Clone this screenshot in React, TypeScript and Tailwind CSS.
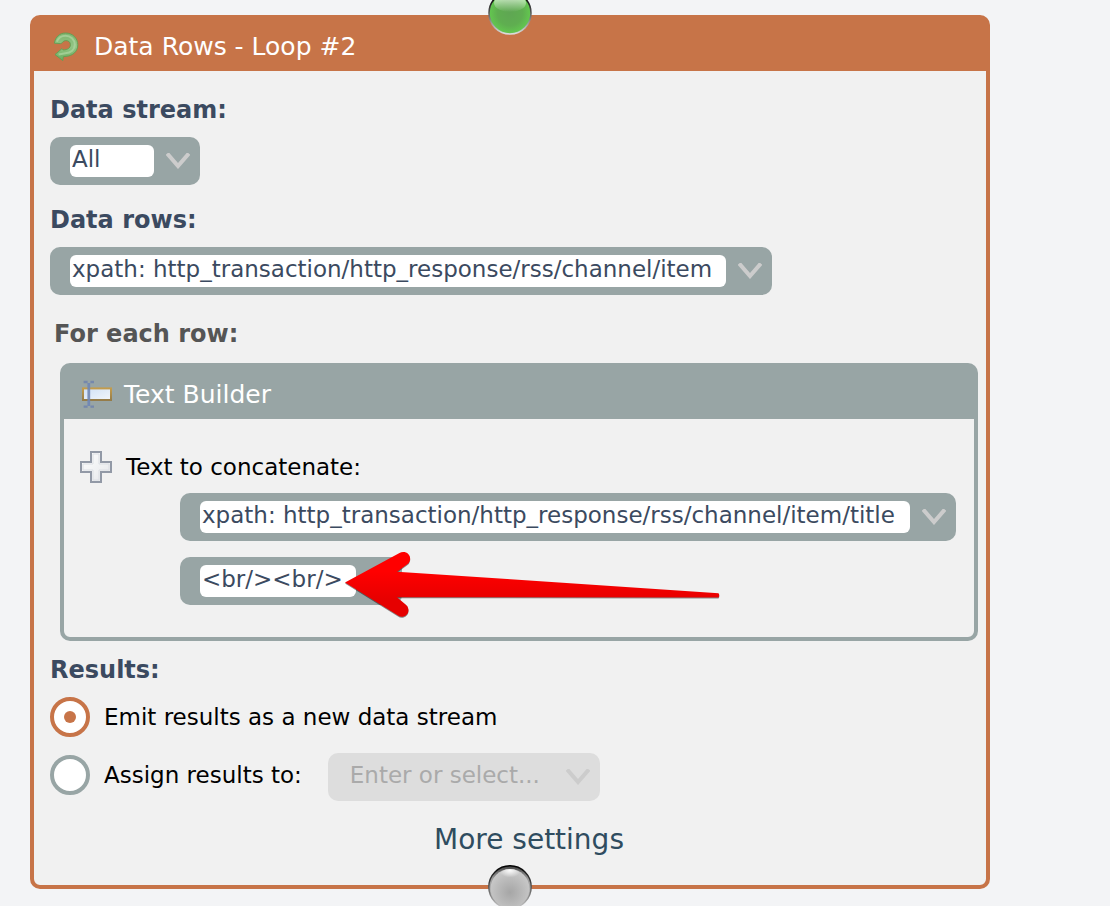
import React, { useState } from 'react';

interface ComboBoxProps {
    label: string;
    value?: string;
    placeholder?: string;
    widthClass: string;
    disabled?: boolean;
}

const ComboBox: React.FC<ComboBoxProps> = ({ label, value = '', placeholder, widthClass, disabled = false }) => {
    const [text, setText] = useState(value);

    return (
        <div className={`inline-flex h-12 max-w-full items-center rounded-[10px] pl-5 ${disabled ? 'bg-[#dddddd]' : 'bg-[#98a5a5]'}`}>
            <input
                type="text"
                aria-label={label}
                value={text}
                placeholder={placeholder}
                disabled={disabled}
                onChange={(e) => setText(e.target.value)}
                className={`h-8 min-w-0 rounded-md px-0.5 pb-1 text-[23px] leading-7 text-[#3b4a60] outline-none placeholder:text-[#aaaaaa] ${disabled ? 'bg-transparent' : 'bg-white'} ${widthClass}`}
            />
            <button type="button" aria-label={`Open ${label}`} disabled={disabled} className="flex h-12 w-[46px] shrink-0 items-center pl-3">
                <svg width="24" height="16" viewBox="0 0 24 16" fill="none" stroke="#cccccc" strokeWidth="4">
                    <path d="M1.2 0.5 L12 13 L22.8 0.5" />
                </svg>
            </button>
        </div>
    );
};

const LoopIcon = () => (
    <svg width="32" height="32" viewBox="0 0 32 32" className="shrink-0">
        <defs>
            <linearGradient id="loop" x1="0" y1="0" x2="0" y2="1">
                <stop offset="0" stopColor="#7db56f" />
                <stop offset="0.5" stopColor="#92c585" />
                <stop offset="1" stopColor="#69ab5d" />
            </linearGradient>
        </defs>
        <path
            d="M4.4 12.2 C5.4 5.6 9.8 2 15.6 2 C22.8 2 27.8 7.4 27.8 13.8 C27.8 20.4 23 24.8 16 25.4 L13.4 25.6 L12.8 29.6 L5 23.6 L12 17.6 L13.2 19 C17.6 18.8 20.4 17 20.4 13.8 C20.4 10.8 18.2 9.4 15.4 9.6 C12.8 9.8 12.6 12.4 10.4 12.6 Z"
            fill="url(#loop)"
            stroke="#609f52"
            strokeWidth="0.9"
            strokeLinejoin="round"
        />
        <path
            d="M6.8 10.6 C8.6 6.4 12 4.8 15.5 4.8 C20.6 4.8 24.8 8.6 24.8 13.8 C24.8 18.6 21 22 15.4 22.2 L8.6 23.4"
            fill="none"
            stroke="#b2d8a6"
            strokeWidth="2"
            opacity="0.65"
        />
    </svg>
);

const TextFieldIcon = () => (
    <svg width="32" height="32" viewBox="0 0 32 32" className="shrink-0">
        <defs>
            <linearGradient id="field" x1="0" y1="0" x2="1" y2="1">
                <stop offset="0" stopColor="#cfe0f5" />
                <stop offset="1" stopColor="#f2f6fb" />
            </linearGradient>
            <linearGradient id="fieldEdge" x1="0" y1="0" x2="0" y2="1">
                <stop offset="0" stopColor="#c39c4c" />
                <stop offset="1" stopColor="#957c49" />
            </linearGradient>
        </defs>
        <rect x="3" y="9.4" width="28" height="11.6" fill="url(#field)" stroke="url(#fieldEdge)" strokeWidth="2" />
        <path d="M8.8 4 V27" stroke="#7087b5" strokeWidth="2.8" opacity="0.9" />
        <path d="M3.6 3 H7.6 M10.4 3 H14 M3.6 27.6 H7.6 M10.4 27.6 H14" stroke="#6f83ae" strokeWidth="2.4" opacity="0.85" />
    </svg>
);

const PlusIcon = () => (
    <svg width="32" height="32" viewBox="0 0 32 32">
        <defs>
            <linearGradient id="plus" x1="0" y1="0" x2="1" y2="1">
                <stop offset="0" stopColor="#ffffff" />
                <stop offset="1" stopColor="#e4e6e9" />
            </linearGradient>
        </defs>
        <path d="M11 1 H21 V11 H31 V21 H21 V31 H11 V21 H1 V11 H11 Z" fill="url(#plus)" stroke="#9299a6" strokeWidth="2" />
        <path d="M13 3 H19 V13 H29 V19 H19 V29 H13 V19 H3 V13 H13 Z" fill="none" stroke="#dcdfe4" strokeWidth="1" />
    </svg>
);

const GreenPort = () => (
    <svg width="44" height="44" viewBox="0 0 44 44">
        <defs>
            <radialGradient id="greenBase" cx="0.5" cy="0.5" r="0.5">
                <stop offset="0" stopColor="#5fa653" />
                <stop offset="0.6" stopColor="#5fae50" />
                <stop offset="1" stopColor="#63c94f" />
            </radialGradient>
            <linearGradient id="greenGloss" x1="0" y1="0" x2="0" y2="1">
                <stop offset="0" stopColor="#ffffff" stopOpacity="0.8" />
                <stop offset="1" stopColor="#ffffff" stopOpacity="0" />
            </linearGradient>
            <linearGradient id="greenRim" x1="0" y1="0" x2="0" y2="1">
                <stop offset="0.2" stopColor="#111111" />
                <stop offset="0.6" stopColor="#777777" />
                <stop offset="1" stopColor="#dddddd" />
            </linearGradient>
        </defs>
        <circle cx="22" cy="22" r="21" fill="url(#greenBase)" stroke="url(#greenRim)" strokeWidth="1.6" />
        <ellipse cx="22" cy="12" rx="16" ry="9" fill="url(#greenGloss)" />
    </svg>
);

const GrayPort = () => (
    <svg width="44" height="44" viewBox="0 0 44 44">
        <defs>
            <radialGradient id="grayBase" cx="0.5" cy="0.6" r="0.55">
                <stop offset="0" stopColor="#a6a6a6" />
                <stop offset="0.6" stopColor="#bababa" />
                <stop offset="1" stopColor="#c8c8c8" />
            </radialGradient>
            <linearGradient id="grayShade" x1="0" y1="0" x2="0" y2="1">
                <stop offset="0" stopColor="#444444" />
                <stop offset="0.3" stopColor="#999999" />
                <stop offset="1" stopColor="#cccccc" />
            </linearGradient>
            <radialGradient id="grayGloss" cx="0.5" cy="0.1" r="0.5">
                <stop offset="0" stopColor="#ffffff" stopOpacity="0.95" />
                <stop offset="1" stopColor="#ffffff" stopOpacity="0" />
            </radialGradient>
            <linearGradient id="grayRim" x1="0" y1="0" x2="0" y2="1">
                <stop offset="0" stopColor="#000000" />
                <stop offset="0.5" stopColor="#555555" />
                <stop offset="1" stopColor="#cccccc" />
            </linearGradient>
        </defs>
        <circle cx="22" cy="22" r="21.2" fill="url(#grayShade)" stroke="url(#grayRim)" strokeWidth="1.4" />
        <circle cx="22" cy="23.4" r="19.4" fill="url(#grayBase)" />
        <ellipse cx="22" cy="11" rx="11" ry="7" fill="url(#grayGloss)" />
    </svg>
);

const Arrow = () => (
    <svg width="384" height="76" viewBox="0 0 384 76" className="pointer-events-none absolute -top-2.5 left-40 max-w-none drop-shadow-[0_1px_0_rgba(0,0,0,0.45)]">
        <defs>
            <linearGradient id="arrow" x1="0" y1="0" x2="0" y2="1">
                <stop offset="0.3" stopColor="#ff0000" />
                <stop offset="0.75" stopColor="#e60000" />
            </linearGradient>
        </defs>
        <path
            d="M5 35.5 L59.5 6 A6.7 6.7 0 0 1 67 17.6 L57 24.7 L378.5 46.2 Q380 48.4 378.5 50.6 L57 50.2 L65.6 57.6 A6.6 6.6 0 0 1 58 68.6 Z"
            fill="url(#arrow)"
        />
    </svg>
);

interface RadioProps {
    id: string;
    label: string;
    checked: boolean;
    onSelect: () => void;
}

const Radio: React.FC<RadioProps> = ({ id, label, checked, onSelect }) => (
    <div className="flex items-center gap-3.5 pb-1">
        <input
            type="radio"
            id={id}
            name="results"
            checked={checked}
            onChange={onSelect}
            className="grid size-10 shrink-0 appearance-none place-items-center rounded-full border-4 border-[#98a5a5] bg-white checked:border-[#c77448] checked:before:size-3 checked:before:rounded-full checked:before:bg-[#c77448]"
        />
        <label htmlFor={id} className="text-[23px] leading-8 text-black">{label}</label>
    </div>
);

export default function App() {
    const [target, setTarget] = useState('emit');

    return (
        <main className="min-h-screen overflow-hidden bg-[#f3f4f6] pt-[15px] pr-[120px] pl-[30px] font-['DejaVu_Sans',Verdana,sans-serif]">
            <section className="relative rounded-[10px] border-4 border-[#c77448] bg-[#f1f1f1]">
                <header className="flex h-[52px] items-center gap-3 bg-[#c77448] px-4 pt-1">
                    <LoopIcon />
                    <h1 className="text-[25px] leading-8 text-white">Data Rows - Loop #2</h1>
                </header>

                <div className="pt-[22px] pr-2 pb-[26px] pl-4">
                    <h2 className="mb-2.5 text-2xl leading-[34px] font-bold text-[#3b4a60]">Data stream:</h2>
                    <div className="mb-[18px] flex">
                        <ComboBox label="Data stream" value="All" widthClass="w-[84px]" />
                    </div>

                    <h2 className="mb-2.5 text-2xl leading-[34px] font-bold text-[#3b4a60]">Data rows:</h2>
                    <div className="mb-[22px] flex">
                        <ComboBox label="Data rows" value="xpath: http_transaction/http_response/rss/channel/item" widthClass="w-[656px]" />
                    </div>

                    <h2 className="mb-3 pl-1 text-2xl leading-[34px] font-bold text-[#555555]">For each row:</h2>
                    <section className="mb-3 ml-2.5 rounded-[10px] border-4 border-[#98a5a5]">
                        <header className="flex h-[52px] items-center gap-3 bg-[#98a5a5] px-4 pt-1">
                            <TextFieldIcon />
                            <h3 className="text-[25px] leading-8 text-white">Text Builder</h3>
                        </header>
                        <div className="px-4 py-8">
                            <div className="mb-2.5 flex items-center gap-3.5">
                                <button type="button" aria-label="Add text">
                                    <PlusIcon />
                                </button>
                                <span className="text-[23px] leading-8 text-black">Text to concatenate:</span>
                            </div>
                            <div className="flex flex-col items-start gap-4 pl-[100px]">
                                <ComboBox label="First text" value="xpath: http_transaction/http_response/rss/channel/item/title" widthClass="w-[710px]" />
                                <div className="relative flex">
                                    <ComboBox label="Second text" value="<br/><br/>" widthClass="w-[156px]" />
                                    <Arrow />
                                </div>
                            </div>
                        </div>
                    </section>

                    <h2 className="mb-2.5 text-2xl leading-[34px] font-bold text-[#3b4a60]">Results:</h2>
                    <Radio id="emit" label="Emit results as a new data stream" checked={target === 'emit'} onSelect={() => setTarget('emit')} />
                    <div className="mt-3 flex items-center gap-[26px]">
                        <Radio id="assign" label="Assign results to:" checked={target === 'assign'} onSelect={() => setTarget('assign')} />
                        <ComboBox label="Result target" placeholder="Enter or select..." widthClass="w-[206px]" disabled />
                    </div>

                    <div className="mt-5 flex justify-center pl-[30px]">
                        <button type="button" className="text-[28px] leading-[38px] text-[#2f4c5f]">More settings</button>
                    </div>
                </div>

                {/* Connection ports on the top and bottom edges */}
                <div className="absolute -top-7 left-1/2 -translate-x-1/2">
                    <GreenPort />
                </div>
                <div className="absolute -bottom-6 left-1/2 -translate-x-1/2">
                    <GrayPort />
                </div>
            </section>
        </main>
    );
}
